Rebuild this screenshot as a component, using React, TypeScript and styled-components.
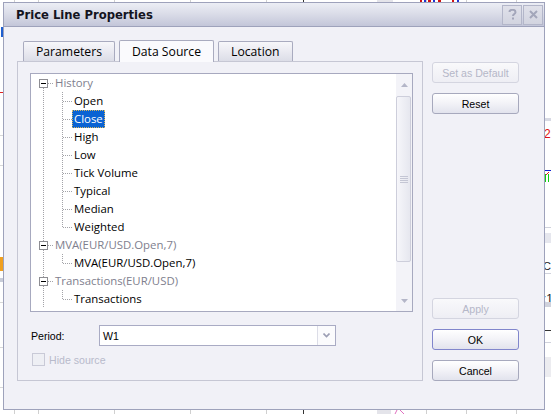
import styled, { createGlobalStyle } from 'styled-components';

type TreeNode = {
	label: string;
	children: string[];
};

const TREE: TreeNode[] = [
	{
		label: 'History',
		children: ['Open', 'Close', 'High', 'Low', 'Tick Volume', 'Typical', 'Median', 'Weighted'],
	},
	{ label: 'MVA(EUR/USD.Open,7)', children: ['MVA(EUR/USD.Open,7)'] },
	{ label: 'Transactions(EUR/USD)', children: ['Transactions'] },
];

const SELECTED = 'Close';

const TABS = ['Parameters', 'Data Source', 'Location'];
const ACTIVE_TAB = 'Data Source';

// dotted tree guides
const DOT = '#a3a3a8';
const vDots = (x: number, y: number, h: string) =>
	`repeating-linear-gradient(to bottom, ${DOT} 0 1px, transparent 1px 2px) ${x}px ${y}px / 1px ${h} no-repeat`;
const hDots = (x: number, y: number, w: number) =>
	`repeating-linear-gradient(to right, ${DOT} 0 1px, transparent 1px 2px) ${x}px ${y}px / ${w}px 1px no-repeat`;

const ChartBackdrop = () => (
	<Backdrop width='551' height='414' viewBox='0 0 551 414'>
		{/* grid ticks peeking out top and bottom */}
		{[14, 38, 114, 190, 266, 426, 466, 516].map(x => (
			<g key={x}>
				<line x1={x + 0.5} y1='0' x2={x + 0.5} y2='3' stroke='#d0d0d0' />
				<line x1={x + 0.5} y1='410' x2={x + 0.5} y2='414' stroke='#d0d0d0' />
			</g>
		))}
		<line x1='303.5' y1='0' x2='303.5' y2='3' stroke='#333' />
		<line x1='303.5' y1='410' x2='303.5' y2='414' stroke='#333' />
		<rect x='377' y='0' width='16' height='3' fill='#e4e4ea' />
		<rect x='377' y='410' width='14' height='4' fill='#e4e4ea' />
		<rect x='420' y='0' width='2' height='3' fill='#d01010' />
		<rect x='424' y='0' width='2' height='3' fill='#2030d0' />
		<rect x='428' y='0' width='3' height='3' fill='#d01010' />
		<rect x='433' y='0' width='2' height='3' fill='#2030d0' />
		<rect x='438' y='0' width='3' height='3' fill='#d01010' />
		<rect x='452' y='0' width='2' height='3' fill='#d01010' />
		<rect x='457' y='0' width='2' height='3' fill='#2030d0' />
		<path d='M395 414 L397 410 M400 410 L404 414' stroke='#e070c0' fill='none' />

		{/* left edge */}
		<rect x='1' y='27' width='2' height='10' fill='#2060d0' />
		<line x1='0' y1='92.5' x2='3' y2='92.5' stroke='#e02020' />
		<line x1='0' y1='135.5' x2='3' y2='135.5' stroke='#d8d8d8' />
		<line x1='0' y1='165.5' x2='3' y2='165.5' stroke='#d8d8d8' />
		<rect x='0' y='257' width='3' height='14' fill='#f0a020' />
		<rect x='0' y='278' width='3' height='4' fill='#c8ccd8' />
		<line x1='0' y1='302.5' x2='3' y2='302.5' stroke='#d8d8d8' />
		<line x1='0' y1='347.5' x2='3' y2='347.5' stroke='#d8d8d8' />
		<line x1='0' y1='387.5' x2='3' y2='387.5' stroke='#d8d8d8' />

		{/* right edge */}
		<rect x='545' y='118' width='6' height='3' fill='#d8dae4' />
		<text x='544' y='138' fontSize='12' fill='#e01010' fontFamily='Liberation Sans, sans-serif'>
			2
		</text>
		<line x1='545' y1='170.5' x2='551' y2='170.5' stroke='#1020d0' />
		<path d='M545 176 L549 172' stroke='#e02020' fill='none' />
		<rect x='545' y='174' width='1' height='8' fill='#10d010' />
		<rect x='548' y='174' width='1' height='8' fill='#10d010' />
		<line x1='545' y1='227.5' x2='551' y2='227.5' stroke='#d0d2dc' />
		<rect x='545' y='233' width='6' height='10' fill='#e6e7ee' />
		<text x='543' y='270' fontSize='11' fill='#222' fontFamily='Liberation Sans, sans-serif'>
			Ch
		</text>
		<line x1='545' y1='273.5' x2='551' y2='273.5' stroke='#d0d2dc' />
		<text x='543' y='303' fontSize='12' fill='#222' fontFamily='Liberation Sans, sans-serif'>
			:1
		</text>
		<rect x='545' y='302' width='6' height='5' fill='#d0d2dc' />
		<line x1='545' y1='330.5' x2='551' y2='330.5' stroke='#333' />
		<line x1='545' y1='342.5' x2='551' y2='342.5' stroke='#d0d2dc' />
		<rect x='545' y='357' width='6' height='20' fill='#ececf0' />
	</Backdrop>
);

const HelpGlyph = () => (
	<svg width='9' height='11' viewBox='0 0 9 11'>
		<path
			d='M1.5 3 C1.5 1.2 3 0.8 4.5 0.8 C6.2 0.8 7.5 1.7 7.5 3.2 C7.5 5 5 5 5 7'
			stroke='currentColor'
			strokeWidth='2'
			fill='none'
		/>
		<rect x='4' y='8.5' width='2' height='2' fill='currentColor' />
	</svg>
);

const CloseGlyph = () => (
	<svg width='9' height='9' viewBox='0 0 9 9'>
		<path d='M1 1 L8 8 M8 1 L1 8' stroke='currentColor' strokeWidth='2' />
	</svg>
);

const Arrow = ({ down }: { down?: boolean }) => (
	<svg width='7' height='4' viewBox='0 0 7 4'>
		<polygon points={down ? '0,0 7,0 3.5,4' : '0,4 7,4 3.5,0'} fill='#b4b6c8' />
	</svg>
);

const Chevron = () => (
	<svg width='7' height='5' viewBox='0 0 7 5'>
		<path d='M0.5 0.5 L3.5 3.5 L6.5 0.5' stroke='#9c9eb4' strokeWidth='1.6' fill='none' />
	</svg>
);

const App = () => {
	return (
		<>
			<GlobalStyle />
			<Screen>
				<ChartBackdrop />
				<Dialog>
					<TitleBar>
						<Title>Price Line Properties</Title>
						<TitleButtons>
							<TitleButton>
								<HelpGlyph />
							</TitleButton>
							<TitleButton>
								<CloseGlyph />
							</TitleButton>
						</TitleButtons>
					</TitleBar>

					<Body>
						<LeftColumn>
							{/* Tabs */}
							<TabStrip>
								{TABS.map(tab => (
									<Tab key={tab} $active={tab === ACTIVE_TAB}>
										{tab}
									</Tab>
								))}
							</TabStrip>

							<Panel>
								{/* Source tree */}
								<TreeBox>
									<TreeList>
										{TREE.map((node, nodeIndex) => (
											<div key={node.label}>
												<TreeRow>
													<RootCell $root $first={nodeIndex === 0}>
														<ExpandBox>
															<Minus />
														</ExpandBox>
													</RootCell>
													<NodeLabel $group>{node.label}</NodeLabel>
												</TreeRow>
												{node.children.map((child, i) => (
													<TreeRow key={child}>
														<RootCell />
														<ChildCell $last={i === node.children.length - 1} />
														<NodeLabel $selected={child === SELECTED}>{child}</NodeLabel>
													</TreeRow>
												))}
											</div>
										))}
									</TreeList>
									<ScrollBar>
										<ScrollArrow $height={22}>
											<Arrow />
										</ScrollArrow>
										<ScrollThumb>
											<Grip />
										</ScrollThumb>
										<ScrollTrack />
										<ScrollArrow $height={21}>
											<Arrow down />
										</ScrollArrow>
									</ScrollBar>
								</TreeBox>

								{/* Period */}
								<FieldRow>
									<FieldLabel>Period:</FieldLabel>
									<Combo>
										<ComboValue>W1</ComboValue>
										<ComboArrow>
											<Chevron />
										</ComboArrow>
									</Combo>
								</FieldRow>

								<CheckRow>
									<CheckBox />
									<CheckLabel>Hide source</CheckLabel>
								</CheckRow>
							</Panel>
						</LeftColumn>

						{/* Buttons */}
						<ButtonColumn>
							<Button $disabled>Set as Default</Button>
							<Button>Reset</Button>
							<Spacer />
							<Button $disabled>Apply</Button>
							<Button $default>OK</Button>
							<Button>Cancel</Button>
						</ButtonColumn>
					</Body>
				</Dialog>
			</Screen>
		</>
	);
};

// Styled Components
const GlobalStyle = createGlobalStyle`
	html, body {
		margin: 0;
		padding: 0;
		background: #ffffff;
	}
	* {
		box-sizing: border-box;
	}
`;

const Screen = styled.div`
	position: relative;
	width: 551px;
	height: 414px;
	overflow: hidden;
	padding: 2px 6px 4px 3px;
	display: flex;
	background: #ffffff;
`;

const Backdrop = styled.svg`
	position: absolute;
	left: 0;
	top: 0;
`;

const Dialog = styled.div`
	position: relative;
	z-index: 1;
	flex: 1;
	display: flex;
	flex-direction: column;
	border: 1px solid #9ea2bb;
	background: #f1f1f7;
`;

const TitleBar = styled.div`
	height: 24px;
	display: flex;
	align-items: center;
	padding-left: 12px;
	background: linear-gradient(to bottom, #eceef5 0%, #d9dbe7 50%, #c3c6d9 100%);
	border-bottom: 1px solid #9ea2bb;
`;

const Title = styled.span`
	font-family: 'DejaVu Sans', Verdana, sans-serif;
	font-weight: bold;
	font-size: 11.6px;
	color: #14141e;
	padding-top: 1px;
`;

const TitleButtons = styled.div`
	margin-left: auto;
	margin-right: 1px;
	display: flex;
	gap: 1px;
`;

const TitleButton = styled.div`
	width: 20px;
	height: 20px;
	display: flex;
	align-items: center;
	justify-content: center;
	border: 1px solid #b3b6c9;
	background: linear-gradient(to bottom, #e0e1ea, #d2d4e0);
	color: #a3a6ba;
`;

const Body = styled.div`
	flex: 1;
	display: flex;
	gap: 9px;
	padding: 13px 0 28px 13px;
`;

const LeftColumn = styled.div`
	width: 406px;
	display: flex;
	flex-direction: column;
`;

const TabStrip = styled.div`
	position: relative;
	z-index: 1;
	height: 21px;
	display: flex;
	align-items: flex-end;
	gap: 4px;
	padding-left: 6px;
`;

const Tab = styled.div<{ $active?: boolean }>`
	height: ${props => (props.$active ? '22px' : '20px')};
	margin-bottom: ${props => (props.$active ? '-1px' : '0')};
	padding: 0 12px;
	display: flex;
	align-items: center;
	justify-content: center;
	font-family: 'Open Sans', 'Liberation Sans', sans-serif;
	font-size: 12.2px;
	color: #000;
	border: 1px solid #a9abbf;
	border-bottom: none;
	border-radius: 2px 2px 0 0;
	background: ${props =>
		props.$active
			? '#fafafd'
			: 'linear-gradient(to bottom, #f7f7fa 0%, #eaeaf1 50%, #dcdde7 100%)'};
`;

const Panel = styled.div`
	height: 320px;
	display: flex;
	flex-direction: column;
	padding: 11px 9px 0 12px;
	border: 1px solid #c6c7d4;
	background: #f1f1f7;
`;

const TreeBox = styled.div`
	height: 239px;
	display: flex;
	border: 1px solid #a7a9bf;
	background: #ffffff;
`;

const TreeList = styled.div`
	flex: 1;
	overflow: hidden;
`;

const TreeRow = styled.div`
	height: 18px;
	display: flex;
`;

const RootCell = styled.div<{ $root?: boolean; $first?: boolean }>`
	width: 22px;
	height: 18px;
	flex-shrink: 0;
	display: flex;
	align-items: center;
	padding-left: 8px;
	background: ${props =>
		[
			props.$first ? vDots(12, 14, '4px') : vDots(12, 0, '100%'),
			props.$root ? hDots(17, 9, 5) : '',
		]
			.filter(Boolean)
			.join(', ')};
`;

const ChildCell = styled.div<{ $last?: boolean }>`
	width: 19px;
	height: 18px;
	flex-shrink: 0;
	background: ${props => [vDots(9, 0, props.$last ? '10px' : '100%'), hDots(10, 9, 9)].join(', ')};
`;

const ExpandBox = styled.span`
	width: 9px;
	height: 9px;
	margin-top: 1px;
	display: flex;
	align-items: center;
	justify-content: center;
	border: 1px solid #8d8d92;
	background: #ffffff;
`;

const Minus = styled.span`
	width: 5px;
	height: 1px;
	background: #000;
`;

const NodeLabel = styled.span<{ $group?: boolean; $selected?: boolean }>`
	height: 18px;
	line-height: 17px;
	padding: 0 2px;
	white-space: nowrap;
	font-family: 'Open Sans', 'Liberation Sans', sans-serif;
	font-size: 11.4px;
	color: ${props => (props.$selected ? '#ffffff' : props.$group ? '#80808e' : '#000000')};
	background: ${props => (props.$selected ? '#0a63d3' : 'transparent')};
	outline: ${props => (props.$selected ? '1px dotted #d8b860' : 'none')};
	outline-offset: -1px;
`;

const ScrollBar = styled.div`
	width: 16px;
	display: flex;
	flex-direction: column;
	background: #f3f3f8;
`;

const ScrollArrow = styled.div<{ $height: number }>`
	height: ${props => props.$height}px;
	display: flex;
	align-items: center;
	justify-content: center;
`;

const ScrollThumb = styled.div`
	height: 166px;
	margin: 0 1px 0 0;
	display: flex;
	align-items: center;
	justify-content: center;
	border: 1px solid #cdcedb;
	border-radius: 2px;
	background: linear-gradient(to right, #f6f6fa, #e6e7ef);
`;

const Grip = styled.span`
	width: 8px;
	height: 7px;
	background: repeating-linear-gradient(to bottom, #c4c6d4 0 1px, transparent 1px 2px);
`;

const ScrollTrack = styled.div`
	flex: 1;
`;

const FieldRow = styled.div`
	margin-top: 13px;
	display: flex;
	align-items: center;
`;

const FieldLabel = styled.span`
	width: 69px;
	padding-left: 1px;
	font-family: 'Liberation Sans', Arial, sans-serif;
	font-size: 10.6px;
	color: #000;
`;

const Combo = styled.div`
	width: 237px;
	height: 21px;
	display: flex;
	border: 1px solid #a9abc4;
	background: #ffffff;
`;

const ComboValue = styled.span`
	flex: 1;
	display: flex;
	align-items: center;
	padding-left: 3px;
	font-family: 'Liberation Sans', Arial, sans-serif;
	font-size: 10.6px;
	color: #000;
`;

const ComboArrow = styled.span`
	width: 18px;
	display: flex;
	align-items: center;
	justify-content: center;
	border-left: 1px solid #dcdde7;
	background: #fbfbfd;
`;

const CheckRow = styled.div`
	margin-top: 7px;
	padding-left: 2px;
	display: flex;
	align-items: center;
`;

const CheckBox = styled.span`
	width: 13px;
	height: 13px;
	border: 1px solid #c9cad7;
	background: #eeeff4;
`;

const CheckLabel = styled.span`
	margin-left: 4px;
	font-family: 'Liberation Sans', Arial, sans-serif;
	font-size: 10.6px;
	color: #b8bacb;
`;

const ButtonColumn = styled.div`
	width: 87px;
	display: flex;
	flex-direction: column;
	gap: 9px;
	padding-top: 22px;
`;

const Spacer = styled.div`
	flex: 1;
`;

const Button = styled.div<{ $disabled?: boolean; $default?: boolean }>`
	height: 21px;
	display: flex;
	align-items: center;
	justify-content: center;
	flex-shrink: 0;
	font-family: 'Liberation Sans', Arial, sans-serif;
	font-size: 10.6px;
	color: ${props => (props.$disabled ? '#b5b7c8' : '#000000')};
	border: 1px solid
		${props => (props.$disabled ? '#d4d5e0' : props.$default ? '#8186cc' : '#a7a9bd')};
	border-radius: 3px;
	background: ${props =>
		props.$disabled
			? 'linear-gradient(to bottom, #f9f9fb, #eeeef4)'
			: 'linear-gradient(to bottom, #ffffff 0%, #f2f2f7 50%, #e2e3ed 100%)'};

	& + & {
		margin-top: 1px;
	}
`;

export default App;
